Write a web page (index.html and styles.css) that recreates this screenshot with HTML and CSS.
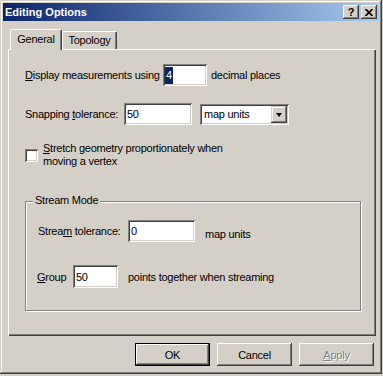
FILE: index.html
```html
<!DOCTYPE html>
<html>
<head>
<meta charset="utf-8">
<link rel="stylesheet" href="styles.css">
</head>
<body>
<div class="window">
  <div class="titlebar">
    <span class="title">Editing Options</span>
    <div class="tbtns">
      <span class="tbtn q">?</span>
      <span class="tbtn"><svg width="8" height="7" viewBox="0 0 8 7"><path d="M0.5 0 L7.5 7 M7.5 0 L0.5 7" stroke="#000" stroke-width="1.7" fill="none"/></svg></span>
    </div>
  </div>
  <div class="client">
    <div class="tabs">
      <div class="tab sel">General</div>
      <div class="tab other">Topology</div>
    </div>
    <div class="panel">
      <div class="row r1">
        <span class="lbl-disp"><u>D</u>isplay measurements using</span>
        <span class="edit e-dec"><span class="hl">4</span></span>
        <span class="after-dec">decimal places</span>
      </div>
      <div class="row r2">
        <span class="lbl-snap">Snapping <u>t</u>olerance:</span>
        <span class="edit e-snap">50</span>
        <span class="select">
          <span class="sel-text">map units</span>
          <span class="drop"><span class="tri"></span></span>
        </span>
      </div>
      <div class="row r3">
        <span class="check"></span>
        <span class="check-text"><u>S</u>tretch geometry proportionately when<br>moving a vertex</span>
      </div>
      <div class="group">
        <span class="legend">Stream Mode</span>
        <div class="row g1">
          <span class="lbl-stream">Strea<u>m</u> tolerance:</span>
          <span class="edit e-stream">0</span>
          <span class="after-stream">map units</span>
        </div>
        <div class="row g2">
          <span class="lbl-group"><u>G</u>roup</span>
          <span class="edit e-group">50</span>
          <span class="after-group">points together when streaming</span>
        </div>
      </div>
    </div>
    <div class="buttons">
      <span class="btn default">OK</span>
      <span class="btn">Cancel</span>
      <span class="btn disabled"><u>A</u>pply</span>
    </div>
  </div>
</div>
</body>
</html>
```
FILE: styles.css
```css
html, body {
  margin: 0;
  padding: 0;
}
body {
  width: 383px;
  height: 376px;
  background: #d4d0c8;
  font-family: "Liberation Sans", Arial, sans-serif;
  font-size: 11px;
  letter-spacing: -0.25px;
  color: #000;
  overflow: hidden;
}
u {
  text-decoration: underline;
  text-underline-offset: 1px;
}
.window {
  width: 382px;
  height: 374px;
  box-sizing: border-box;
  padding: 3px;
  background: #d4d0c8;
  box-shadow: inset -1px -1px #404040, inset 1px 1px #d4d0c8, inset -2px -2px #808080, inset 2px 2px #fff;
  display: flex;
  flex-direction: column;
}
.titlebar {
  height: 18px;
  flex: none;
  display: flex;
  align-items: center;
  padding-left: 2px;
  background: linear-gradient(to right, #0a246a, #a6caf0);
}
.title {
  flex: 1;
  color: #fff;
  font-weight: bold;
  letter-spacing: 0;
  line-height: 18px;
}
.tbtns {
  display: flex;
  gap: 2px;
  margin-right: 2px;
}
.tbtn {
  width: 16px;
  height: 14px;
  box-sizing: border-box;
  background: #d4d0c8;
  box-shadow: inset -1px -1px #404040, inset 1px 1px #fff, inset -2px -2px #808080;
  display: flex;
  align-items: center;
  justify-content: center;
}
.tbtn.q {
  font-weight: bold;
  font-size: 11px;
  line-height: 14px;
  letter-spacing: 0;
}
.client {
  flex: 1;
  display: flex;
  flex-direction: column;
  padding: 0 3px 0 5px;
}
.tabs {
  display: flex;
  align-items: flex-end;
  height: 20px;
  margin-top: 8px;
  padding-left: 2px;
}
.tab {
  box-sizing: border-box;
  height: 18px;
  border-left: 1px solid #fff;
  border-top: 1px solid #fff;
  border-right: 1px solid #404040;
  border-radius: 2px 2px 0 0;
  box-shadow: inset -1px 0 #808080;
  text-align: center;
  line-height: 17px;
  background: #d4d0c8;
}
.tab.sel {
  width: 52px;
  height: 21px;
  margin-bottom: -1px;
  padding-top: 1px;
  position: relative;
  z-index: 1;
}
.tab.other {
  width: 55px;
}
.panel {
  height: 287px;
  box-sizing: border-box;
  box-shadow: inset 1px 1px #fff, inset -1px -1px #404040, inset -2px -2px #808080;
  display: flex;
  flex-direction: column;
  padding-left: 17px;
}
.row {
  display: flex;
  align-items: center;
}
.edit {
  box-sizing: border-box;
  height: 22px;
  background: #fff;
  box-shadow: inset 1px 1px #808080, inset -1px -1px #fff, inset 2px 2px #404040, inset -2px -2px #d4d0c8;
  padding: 0 3px;
  display: flex;
  align-items: center;
}
.r1 {
  margin-top: 15px;
  height: 22px;
}
.lbl-disp {
  width: 138px;
}
.e-dec {
  width: 44px;
  padding-left: 2px;
}
.hl {
  background: #0a246a;
  color: #fff;
  height: 17px;
  line-height: 17px;
  padding: 0 1px;
}
.after-dec {
  margin-left: 4px;
}
.r2 {
  margin-top: 17px;
  height: 22px;
}
.lbl-snap {
  width: 99px;
}
.e-snap {
  width: 68px;
}
.select {
  box-sizing: border-box;
  width: 89px;
  height: 21px;
  margin-left: 8px;
  background: #fff;
  box-shadow: inset 1px 1px #808080, inset -1px -1px #fff, inset 2px 2px #404040, inset -2px -2px #d4d0c8;
  display: flex;
  align-items: center;
  padding: 2px;
}
.sel-text {
  flex: 1;
  padding-left: 2px;
}
.drop {
  width: 16px;
  height: 17px;
  box-sizing: border-box;
  background: #d4d0c8;
  box-shadow: inset -1px -1px #404040, inset 1px 1px #d4d0c8, inset -2px -2px #808080, inset 2px 2px #fff;
  display: flex;
  align-items: center;
  justify-content: center;
}
.tri {
  width: 0;
  height: 0;
  border-left: 3.5px solid transparent;
  border-right: 3.5px solid transparent;
  border-top: 4px solid #000;
  margin-top: 1px;
}
.r3 {
  margin-top: 17px;
}
.check {
  width: 13px;
  height: 13px;
  box-sizing: border-box;
  background: #fff;
  box-shadow: inset 1px 1px #808080, inset -1px -1px #fff, inset 2px 2px #404040, inset -2px -2px #d4d0c8;
}
.check-text {
  margin-left: 5px;
  line-height: 13px;
}
.group {
  margin-top: 33px;
  width: 336px;
  height: 110px;
  box-sizing: border-box;
  border: 1px solid #808080;
  box-shadow: inset 1px 1px #fff, 1px 1px #fff;
  display: flex;
  flex-direction: column;
  padding-left: 12px;
}
.legend {
  align-self: flex-start;
  margin: -8px 0 0 -5px;
  padding: 0 2px;
  line-height: 13px;
  background: #d4d0c8;
}
.g1 {
  margin-top: 13px;
  height: 22px;
}
.lbl-stream {
  width: 90px;
}
.e-stream {
  width: 67px;
}
.after-stream {
  margin-left: 10px;
  margin-top: 6px;
}
.g2 {
  margin-top: 23px;
  height: 23px;
}
.lbl-group {
  width: 36px;
  margin-left: -1px;
}
.e-group {
  width: 45px;
  height: 23px;
}
.after-group {
  margin-left: 10px;
}
.buttons {
  display: flex;
  justify-content: flex-end;
  gap: 7px;
  margin-top: 7px;
  padding-right: 2px;
}
.btn {
  width: 75px;
  height: 23px;
  box-sizing: border-box;
  background: #d4d0c8;
  box-shadow: inset -1px -1px #404040, inset 1px 1px #fff, inset -2px -2px #808080;
  display: flex;
  align-items: center;
  justify-content: center;
}
.btn.default {
  border: 1px solid #000;
}
.btn.disabled {
  color: #808080;
  text-shadow: 1px 1px #fff;
}
```
